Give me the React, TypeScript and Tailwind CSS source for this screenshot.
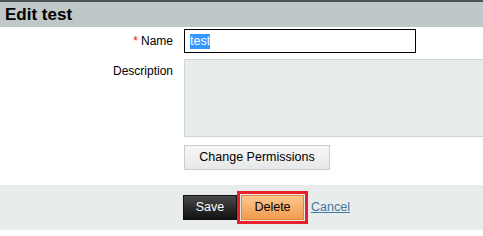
export default function App() {
  return (
    <div
      className="w-[483px] h-[236px] overflow-hidden bg-white text-black"
      style={{ fontFamily: '"Liberation Sans", Arial, sans-serif' }}
    >
      {/* Header */}
      <div className="h-[27px] border-t-2 border-[#4f5354] bg-[#c0c7c9] pl-[5px] flex items-center">
        <h1 className="text-[17px] font-bold leading-none">Edit test</h1>
      </div>

      {/* Form */}
      <div className="mt-[2px] grid grid-cols-[173px_1fr] gap-x-[11px]">
        <label className="flex items-center justify-end text-[12px]">
          <span className="text-[#e8202a] mr-[3px]">*</span>Name
        </label>
        <div className="h-[24px] w-[232px] border border-black flex items-center pl-[5px] text-[12.5px]">
          <span className="bg-[#3399ff] text-white leading-[15px]">test</span>
        </div>

        <label className="mt-[6px] pt-[5px] text-right text-[12px] leading-[14px]">
          Description
        </label>
        <div className="mt-[6px] h-[78px] w-[320px] border border-[#cfd4d5] bg-[#e9eced]" />

        <div />
        <div className="mt-[7px]">
          <button className="h-[25px] w-[146px] border border-[#c9cccd] bg-gradient-to-b from-[#f7f7f7] to-[#e7e8e8] text-[12.5px]">
            Change Permissions
          </button>
        </div>
      </div>

      {/* Footer */}
      <div className="mt-[15px] h-[45px] bg-[#e9eced] pl-[183px] flex items-center">
        <button className="h-[25px] w-[54px] border border-[#111] bg-gradient-to-b from-[#4a4a4a] to-[#121212] text-white text-[12.5px]">
          Save
        </button>
        <button className="ml-[4px] h-[25px] w-[63px] border border-[#d9883e] bg-gradient-to-b from-[#fcc68c] to-[#f19c4e] text-[12.5px] outline-[3px] outline-solid outline-[#e8202a] outline-offset-[1px]">
          Delete
        </button>
        <a href="#" className="ml-[7px] text-[12.5px] text-[#4677a0] underline">
          Cancel
        </a>
      </div>
    </div>
  );
}
